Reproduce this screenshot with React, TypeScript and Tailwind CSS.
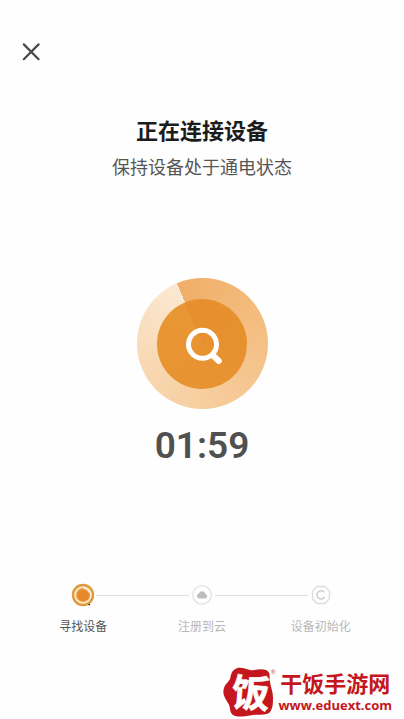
import { clsx } from "clsx";

type StepState = "active" | "pending";

interface Step {
  label: string;
  icon: () => React.ReactNode;
  state: StepState;
}

function CloseIcon() {
  return (
    <svg viewBox="0 0 20 20" className="h-5 w-5" fill="none" stroke="#484848" strokeWidth="2.2" strokeLinecap="round">
      <path d="M2.8 2.4 17.6 17.2M17.6 2.4 2.8 17.2" />
    </svg>
  );
}

function SearchIcon() {
  return (
    <svg viewBox="0 0 44 44" className="h-11 w-11" fill="none" stroke="#fff" strokeLinecap="round">
      <circle cx="22.5" cy="22.3" r="14" strokeWidth="5" />
      <path d="M33 33.5 38.8 39" strokeWidth="6" />
    </svg>
  );
}

function SearchingIcon() {
  return (
    <svg viewBox="0 0 24 24" className="h-6 w-6" fill="none">
      <circle cx="12" cy="12" r="10" fill="#fdecd2" stroke="#e09a3e" strokeWidth="2.4" />
      <circle cx="12" cy="12" r="7.2" fill="#f0a95a" />
      <circle cx="12.2" cy="12.2" r="6" fill="#e8862a" />
      <path d="M12.5 5.4a6.6 6.6 0 0 1 5.8 4.2" stroke="#fdecd2" strokeWidth="1.4" />
      <path d="M17.6 21h1.4v1.2h-1.4z" fill="#111" />
    </svg>
  );
}

function CloudIcon() {
  return (
    <svg viewBox="0 0 24 24" className="h-6 w-6">
      <circle cx="12" cy="12" r="9.2" fill="#fff" stroke="#e4e4e4" strokeWidth="1.5" />
      <path d="M9.2 15.5a2.6 2.6 0 0 1-.4-5.1 3.5 3.5 0 0 1 6.7.6 2.3 2.3 0 0 1-.2 4.5z" fill="#bdbdbd" />
    </svg>
  );
}

function InitIcon() {
  return (
    <svg viewBox="0 0 24 24" className="h-6 w-6" fill="none">
      <path
        d="M8.2 3.5h7.6l4.7 4.7v7.6l-4.7 4.7H8.2l-4.7-4.7V8.2z"
        stroke="#dedede"
        strokeWidth="1.4"
        strokeLinejoin="round"
      />
      <path d="M15.2 9.2a4.1 4.1 0 1 0 .4 4.8" stroke="#cecece" strokeWidth="1.6" />
    </svg>
  );
}

const steps: Step[] = [
  { label: "寻找设备", icon: SearchingIcon, state: "active" },
  { label: "注册到云", icon: CloudIcon, state: "pending" },
  { label: "设备初始化", icon: InitIcon, state: "pending" },
];

function ProgressDial() {
  return (
    <div className="flex h-[131px] w-[131px] items-center justify-center rounded-full bg-[conic-gradient(from_-23deg,#f0ae68,#f4bd80_25%,#f6ca98_50%,#f8d8b2_75%,#fbe8d2)]">
      <div className="flex h-[90px] w-[90px] items-center justify-center rounded-full bg-[conic-gradient(from_-23deg,#e68f2c,#e99634)]">
        <SearchIcon />
      </div>
    </div>
  );
}

function StepBar() {
  return (
    <ol className="grid w-full grid-cols-3">
      {steps.map((step, i) => (
        <li key={step.label} className="flex flex-col items-center gap-3">
          <div className="flex w-full items-center gap-px">
            <span className={clsx("h-px flex-1", i > 0 && "bg-[#dedede]")} />
            <step.icon />
            <span className={clsx("h-px flex-1", i < steps.length - 1 && "bg-[#dedede]")} />
          </div>
          <span className={clsx("text-xs", step.state === "active" ? "text-[#555]" : "text-[#b8b8b8]")}>
            {step.label}
          </span>
        </li>
      ))}
    </ol>
  );
}

function Brand() {
  return (
    <a href="#home" className="flex items-center gap-0.5 text-[#c4161c]">
      <svg viewBox="0 0 54 54" className="h-[54px] w-[54px]">
        <path
          d="M12 5c4-4 10-2 16 0 5 1 10-2 16 0 5 2 3 7 4 12 1 6 3 10 3 16 0 5 0 10-3 14-4 4-11 2-17 3-7 1-15 3-20 0-4-3-2-8-5-12-3-5-6-9-4-15 1-4 4-5 6-9 1-3 1-7 4-9z"
          fill="#c4161c"
        />
        <text
          x="29"
          y="42"
          textAnchor="middle"
          transform="rotate(4 29 28)"
          fontSize="38"
          fontWeight="700"
          fill="#fff"
          stroke="#fff"
          strokeWidth="0.6"
        >
          饭
        </text>
        <text x="49" y="9" fontSize="6" fill="#c4161c">®</text>
      </svg>
      <span className="flex flex-col items-center pt-0.5">
        <span className="text-[22px] leading-6 font-bold">干饭手游网</span>
        <span className="font-['Open_Sans',sans-serif] text-[13px] leading-4 font-bold">www.eduext.com</span>
      </span>
    </a>
  );
}

export default function App() {
  return (
    <div className="flex min-h-screen flex-col bg-[#fefefe] font-['Liberation_Sans','Noto_Sans_CJK_SC',sans-serif]">
      <header className="px-[21px] pt-[42px]">
        <button type="button" aria-label="关闭" className="block">
          <CloseIcon />
        </button>
      </header>

      <main className="flex flex-col items-center px-6">
        <h1 className="mt-[54px] text-[22px] leading-8 font-bold text-[#1c1c1c]">正在连接设备</h1>
        <p className="mt-1 text-lg leading-8 text-[#555]">保持设备处于通电状态</p>

        <div className="mt-[94px]">
          <ProgressDial />
        </div>
        <p className="mt-[17px] font-['Roboto',sans-serif] text-[37px] leading-10 font-semibold text-[#505050]">
          01:59
        </p>

        <div className="mt-[117px] w-full">
          <StepBar />
        </div>
      </main>

      <footer className="mt-auto flex justify-end pr-3">
        <Brand />
      </footer>
    </div>
  );
}
